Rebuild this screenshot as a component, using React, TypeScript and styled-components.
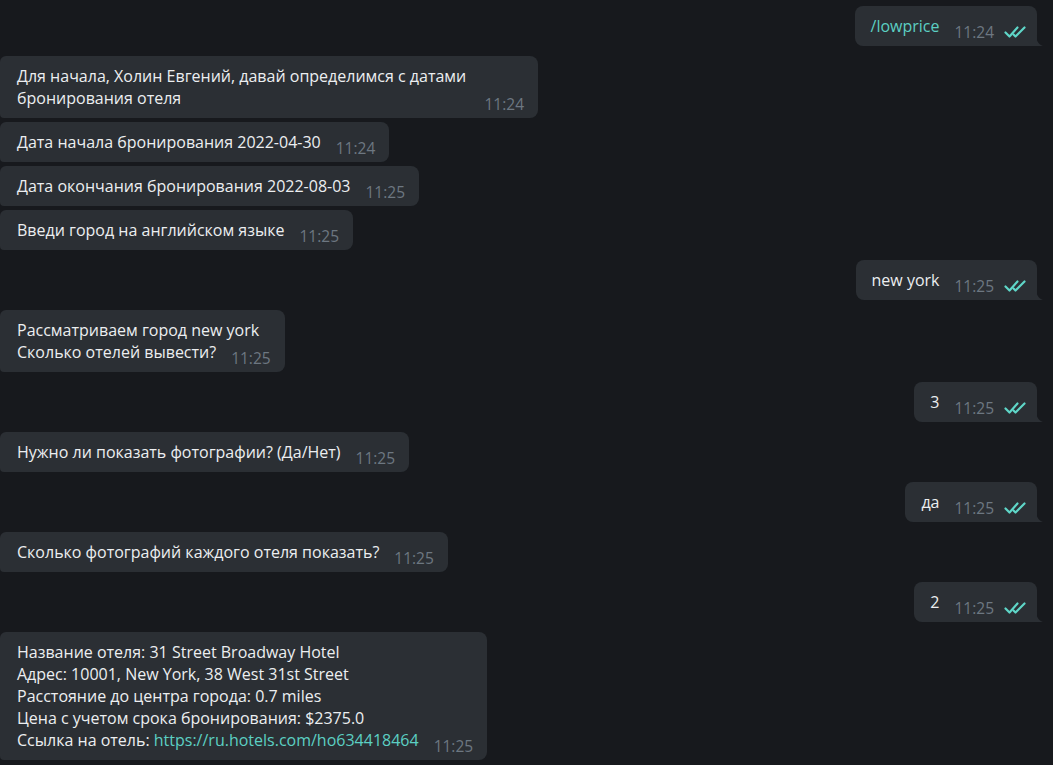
import React from "react";
import styled, { createGlobalStyle } from "styled-components";

const Global = createGlobalStyle`
  html, body { margin: 0; padding: 0; background: #17191d; }
  body { font-family: "Open Sans", "Noto Sans", sans-serif; }
`;

const Chat = styled.div`
  display: flex;
  flex-direction: column;
  padding: 6px 0 0 0;
  width: 1053px;
  height: 765px;
  overflow: hidden;
  box-sizing: border-box;
`;

const Row = styled.div<{ $out?: boolean; $gap: number }>`
  display: flex;
  justify-content: ${(p) => (p.$out ? "flex-end" : "flex-start")};
  margin-top: ${(p) => p.$gap}px;
  padding-right: ${(p) => (p.$out ? "16px" : "0")};
`;

const Bubble = styled.div<{ $out?: boolean }>`
  position: relative;
  box-sizing: border-box;
  max-width: 538px;
  background: #2b2f34;
  color: #eceef0;
  font-size: 16px;
  line-height: 22px;
  padding: 9px ${(p) => (p.$out ? "10px" : "14px")} 9px ${(p) => (p.$out ? "16px" : "17px")};
  border-radius: ${(p) => (p.$out ? "8px 8px 0 8px" : "6px 8px 8px 4px")};
  &::after {
    content: "";
    display: block;
    clear: both;
  }
`;

const Meta = styled.span`
  float: right;
  display: inline-flex;
  align-items: center;
  gap: 10px;
  margin-left: 15px;
  position: relative;
  top: 6px;
  font-size: 15.5px;
  line-height: 22px;
  color: #6d7781;
`;

const Link = styled.span`
  color: #5ccfc3;
`;

const Tail = styled.svg`
  position: absolute;
  right: -6px;
  bottom: 0;
  width: 7px;
  height: 12px;
`;

const Checks = () => (
  <svg width="23" height="12" viewBox="0 0 23 12" fill="none">
    <path d="M1.5 6.5 L5.5 10.5 L13.5 1.5" stroke="#5fd6c8" strokeWidth="2.2" strokeLinecap="round" strokeLinejoin="round" />
    <path d="M9.5 8.5 L11.5 10.5 L20.5 1.5" stroke="#5fd6c8" strokeWidth="2.2" strokeLinecap="round" strokeLinejoin="round" />
  </svg>
);

type Msg = {
  out?: boolean;
  time: string;
  gap: number;
  body: React.ReactNode;
};

const messages: Msg[] = [
  { out: true, time: "11:24", gap: 0, body: <Link>/lowprice</Link> },
  {
    time: "11:24",
    gap: 10,
    body: "Для начала, Холин Евгений, давай определимся с датами бронирования отеля",
  },
  { time: "11:24", gap: 4, body: "Дата начала бронирования 2022-04-30" },
  { time: "11:25", gap: 4, body: "Дата окончания бронирования 2022-08-03" },
  { time: "11:25", gap: 4, body: "Введи город на английском языке" },
  { out: true, time: "11:25", gap: 10, body: "new york" },
  {
    time: "11:25",
    gap: 10,
    body: (
      <>
        Рассматриваем город new york
        <br />
        Сколько отелей вывести?
      </>
    ),
  },
  { out: true, time: "11:25", gap: 10, body: "3" },
  { time: "11:25", gap: 10, body: "Нужно ли показать фотографии? (Да/Нет)" },
  { out: true, time: "11:25", gap: 10, body: "да" },
  { time: "11:25", gap: 10, body: "Сколько фотографий каждого отеля показать?" },
  { out: true, time: "11:25", gap: 10, body: "2" },
  {
    time: "11:25",
    gap: 10,
    body: (
      <>
        Название отеля: 31 Street Broadway Hotel
        <br />
        Адрес: 10001, New York, 38 West 31st Street
        <br />
        Расстояние до центра города: 0.7 miles
        <br />
        Цена с учетом срока бронирования: $2375.0
        <br />
        Ссылка на отель: <Link>https://ru.hotels.com/ho634418464</Link>
      </>
    ),
  },
];

export default function App() {
  return (
    <>
      <Global />
      <Chat>
        {messages.map((m, i) => (
          <Row key={i} $out={m.out} $gap={m.gap}>
            <Bubble $out={m.out}>
              {m.body}
              <Meta>
                {m.time}
                {m.out && <Checks />}
              </Meta>
              {m.out && (
                <Tail viewBox="0 0 7 12">
                  <path d="M0 0 C0 6 2 10 7 12 L0 12 Z" fill="#2b2f34" />
                </Tail>
              )}
            </Bubble>
          </Row>
        ))}
      </Chat>
    </>
  );
}
